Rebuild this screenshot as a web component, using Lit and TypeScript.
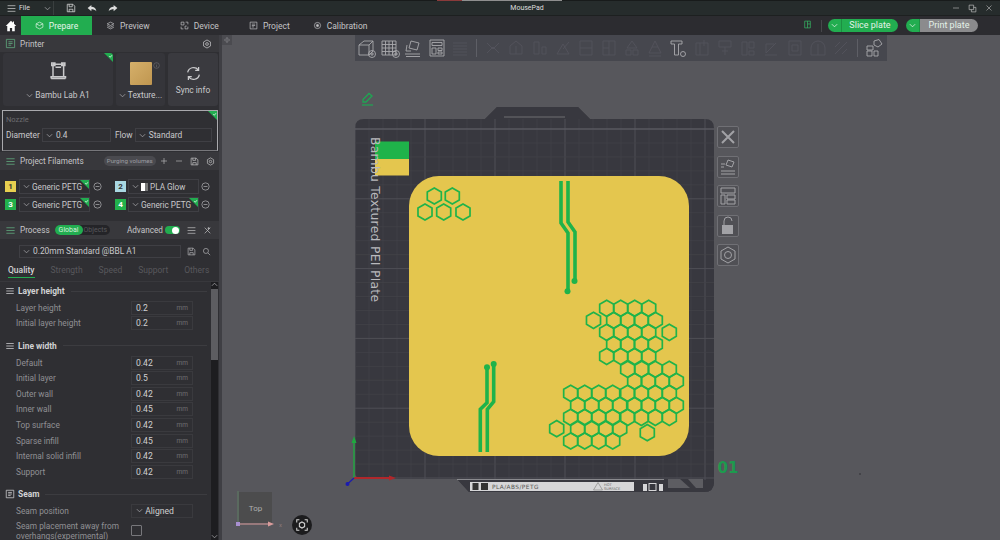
import { LitElement, html, css, svg } from 'lit';
import { customElement } from 'lit/decorators.js';

// hex centres on the pad, page coordinates
const colA = [606.7, 620.7, 634.7, 648.7];
const colB = [613.7, 627.7, 641.3, 655.3];
const lowA = [570.7, 584.7, 598.7, 612.7];
const lowB = [577.7, 591.7, 605.7, 619.7];
const hexRows: [number, number[]][] = [
  [196, [434.3, 452.3]],
  [212, [425, 443.7, 463]],
  [308.3, colA],
  [320.3, [593.5, ...colB]],
  [332.3, [...colA, 669.3]],
  [344.3, colB],
  [356.3, colA],
  [369.3, [627.7, 641.7, 655.3, 669.3]],
  [381.3, [634.7, 648.3, 662.3, 676.3]],
  [393.3, [...lowA, 627.7, 641.3, 655.3, 669.3]],
  [405.3, [...lowB, 634.7, 648.3, 662.3, 676.3]],
  [417.3, [...lowA, 627.7, 641.3, 655.3, 669.3]],
  [428.7, [556.7, ...lowB]],
  [432.7, [647.3]],
  [441, lowA],
];

const hex = (x: number, y: number) => {
  const r = 8.1;
  const w = r * 0.866;
  return `${x},${y - r} ${x + w},${y - r / 2} ${x + w},${y + r / 2} ${x},${y + r} ${x - w},${y + r / 2} ${x - w},${y - r / 2}`;
};

const chevron = html`<svg class="chev" viewBox="0 0 8 8"><path d="M1 2.5 4 5.5 7 2.5" /></svg>`;
const tick = html`<svg class="tick" viewBox="0 0 8 8"><path d="M3 4.4 4.4 5.6 6.6 3" /></svg>`;

const icon = (body: unknown, size = 12) =>
  html`<svg class="icon" width=${size} height=${size} viewBox="0 0 16 16">${body}</svg>`;

const ICONS = {
  menu: svg`<path d="M1 3H15M1 8H15M1 13H15" />`,
  save: svg`<path d="M2 2H11L14 5V14H2ZM5 2V6H10V2M5 14V10H11V14" />`,
  undo: svg`<path fill="currentColor" stroke="none" d="M7 3 1 8 7 13V10C10 10 13 11 15 13 14 8 11 6 7 6Z" />`,
  redo: svg`<path fill="currentColor" stroke="none" d="M9 3 15 8 9 13V10C6 10 3 11 1 13 2 8 5 6 9 6Z" />`,
  home: svg`<path fill="currentColor" stroke="none" d="M8 1 1 8H3V15H6.5V10.5H9.5V15H13V8H15L12 5V2H10.5V3.5Z" />`,
  prepare: svg`<path d="M8 2 14 5V11L8 14 2 11V5ZM2 5 8 8 14 5" />`,
  preview: svg`<path d="M8 2 14 5 8 8 2 5ZM2 8 8 11 14 8M2 11 8 14 14 11" />`,
  device: svg`<path d="M2 2H7V7H2ZM10 2H14V6M14 10V14H9V9H12M2 10V14H6" />`,
  project: svg`<path d="M2 2H14V14H2ZM5 5.5H11M5 8H11M5 10.5H9" />`,
  calib: svg`<circle cx="8" cy="8" r="5.5" /><circle cx="8" cy="8" r="2" fill="currentColor" />`,
  gear: svg`<path d="M8 1.5 13.5 4.7V11.3L8 14.5 2.5 11.3V4.7Z" /><circle cx="8" cy="8" r="2.2" />`,
  printer: svg`<path d="M4 2.5H12.5M4 2.5V12.5M12.5 2.5V12.5M2.5 14H14M2.5 14V12.5H14V14M3 1.5H5.5V3.5H3ZM11 1.5H13.5V3.5H11ZM6 5H10.5" />`,
  minus: svg`<circle cx="8" cy="8" r="6.5" /><path d="M4.5 8H11.5" />`,
  plus: svg`<path d="M8 2V14M2 8H14" />`,
  dash: svg`<path d="M2 8H14" />`,
  list: svg`<path d="M1 3H15M1 8H15M1 13H15" />`,
  wrench: svg`<path d="M3 3 13 13M3 13 13 3M10 2V6M8 4H12" />`,
  search: svg`<circle cx="7" cy="7" r="4.5" /><path d="M10.5 10.5 14.5 14.5" />`,
  layers: svg`<path d="M2 4H14M2 8H14M2 12H14" />`,
  info: svg`<circle cx="8" cy="8" r="6.5" /><path d="M8 7V12M8 4V5.5" />`,
  pages: svg`<path d="M2 2H10V10H2ZM6 10V14H14V6H10" />`,
  sync: svg`<path d="M2.5 7A5.7 5.7 0 0 1 12.5 4.5M13.5 9A5.7 5.7 0 0 1 3.5 11.5M12.8 1.8V5H9.6M3.2 14.2V11H6.4" />`,
};

const TOOL_ICONS = {
  cube: svg`<path d="M2 7 7 3H16V13L12 17H2ZM2 7H12V17M12 7 16 3" /><circle cx="15" cy="16" r="3.5" /><path d="M13 16H17M15 14V18" />`,
  grid: svg`<path d="M2 3H16V17H2ZM2 6.5H16M2 10H16M2 13.5H16M5.5 3V17M9 3V17M12.5 3V17" /><circle cx="16" cy="16" r="3.5" /><path d="M14 16H18M16 14V18" />`,
  arrange: svg`<path d="M8 3 16 5 14 12 6 10ZM2 16H17M3 18.5H17M4 7 3 13H8" />`,
  layout: svg`<path d="M3 2H17V18H3ZM5 4.5H15V7.5H5ZM5 10H9V16H5ZM11 10H15V12.5H11ZM11 14H15V16H11Z" />`,
  lines: svg`<path d="M3 5H17M3 8H17M3 11H17M3 14H17M3 17H17" />`,
  tee: svg`<path d="M2 3H13V6H9.5V17H5.5V6H2Z" /><circle cx="14" cy="16" r="2.5" />`,
  puzzle: svg`<path d="M10 3 15 1.5 18 6 14 9 10 7ZM3 8H9V12H3ZM3 13H8V18H3ZM10 13H14V18H10Z" />`,
};

// the greyed-out tools, barely visible in the toolbar
const FAINT_ICONS = [
  svg`<path d="M4 5 10 11 16 5M4 15 10 9 16 15" />`,
  svg`<path d="M10 3 16 8V16H4V8ZM10 8V16" />`,
  svg`<path d="M4 4H9V16H4ZM12 9H16V16H12Z" />`,
  svg`<path d="M4 16 10 6 16 16ZM10 11 16 4" />`,
  svg`<path d="M4 3H16V17H4ZM4 10H16" />`,
  svg`<path d="M4 3H16V17H4ZM10 3V17M4 10H10" />`,
  svg`<path d="M10 3 15 10H5ZM4 12H9V17H4ZM11 12H16V17H11Z" />`,
  svg`<path d="M10 3 16 15H4ZM7 9H13M4 18H16" />`,
  svg`<path d="M4 5H16V17H4ZM8 5V17M12 2V8" />`,
  svg`<path d="M4 3H16V9H4ZM10 9V17M7 13H13" />`,
  svg`<path d="M4 4H9V17H4ZM11 4H16V10H11ZM11 13H16V17H11Z" />`,
  svg`<path d="M5 15 15 5M5 15V6H13M4 17H16" />`,
  svg`<path d="M4 3H16V17H4ZM7 7H13V13H7Z" />`,
  svg`<path d="M3 10A7 7 0 0 1 17 10V17H3ZM10 6V17" />`,
  svg`<path d="M4 16 16 4M11 16 16 11M4 9 9 4" />`,
];

const SIDE_ICONS = [
  svg`<path stroke-width="2" d="M5 5 17 17M17 5 5 17" />`,
  svg`<path d="M11 4 17 6 15 11 9 9ZM4 15H18M4 18H18M4 8H8M4 11H7" />`,
  svg`<path d="M4 3H18V8H4ZM4 10H8V19H4ZM10 10H18V14H10ZM10 15H18V19H10Z" />`,
  svg`<path d="M7 10V6A4 4 0 0 1 15 6" /><path fill="currentColor" stroke="none" d="M5 10H16V19H5Z" />`,
  svg`<path d="M11 3 18 7V15L11 19 4 15V7Z" /><circle cx="11" cy="11" r="3.5" />`,
];

interface Group {
  title: string;
  glyph: unknown;
  rows: [string, string][];
}

const GROUPS: Group[] = [
  {
    title: 'Layer height',
    glyph: ICONS.layers,
    rows: [
      ['Layer height', '0.2'],
      ['Initial layer height', '0.2'],
    ],
  },
  {
    title: 'Line width',
    glyph: ICONS.layers,
    rows: [
      ['Default', '0.42'],
      ['Initial layer', '0.5'],
      ['Outer wall', '0.42'],
      ['Inner wall', '0.45'],
      ['Top surface', '0.42'],
      ['Sparse infill', '0.45'],
      ['Internal solid infill', '0.42'],
      ['Support', '0.42'],
    ],
  },
];

@customElement('app-root')
export class AppRoot extends LitElement {
  static styles = css`
    :host {
      display: block;
      width: 1000px;
      height: 540px;
      overflow: hidden;
      font-family: Roboto, 'Noto Sans', sans-serif;
      font-size: 8.2px;
      color: #c9c9cb;
      background: #2d2d31;
      white-space: nowrap;
    }
    svg.icon {
      fill: none;
      stroke: currentColor;
      stroke-width: 1.2;
      flex: none;
    }
    .chev {
      width: 7px;
      height: 7px;
      flex: none;
      fill: none;
      stroke: #a5a5a8;
      stroke-width: 0.9;
    }
    .strip {
      height: 1px;
      background: #181b1b;
      display: flex;
      padding-left: 437px;
    }
    .strip i {
      width: 25px;
      background: #8a3a3a;
    }
    .strip b {
      width: 100px;
      background: #8f8f8f;
    }
    .titlebar {
      height: 15px;
      background: #262c2c;
      display: flex;
      align-items: center;
      color: #dcdcdc;
      font-size: 7px;
      border-bottom: 1px solid #1d2020;
      box-sizing: border-box;
    }
    .file {
      width: 54px;
      padding-left: 7px;
      box-sizing: border-box;
      display: flex;
      align-items: center;
      gap: 3px;
      border-right: 1px solid #3a3f3f;
      height: 14px;
    }
    .file .chev {
      margin-left: 11px;
    }
    .quick {
      display: flex;
      gap: 11px;
      padding-left: 12px;
      width: 413px;
      box-sizing: border-box;
    }
    .title {
      width: 120px;
      text-align: center;
    }
    .win {
      margin-left: auto;
      display: flex;
      gap: 8px;
      padding-right: 7px;
      color: #c0c0c0;
    }
    .tabs {
      height: 19px;
      background: #2c2c30;
      display: flex;
      align-items: center;
      font-size: 8.5px;
    }
    .home {
      width: 21px;
      display: flex;
      justify-content: center;
      color: #fff;
    }
    .tab {
      height: 19px;
      display: flex;
      align-items: center;
      gap: 5px;
      color: #c4c4c6;
    }
    .tab.on {
      background: #22ad50;
      color: #e6f5ea;
      justify-content: center;
      width: 71px;
    }
    .actions {
      margin-left: auto;
      display: flex;
      align-items: center;
      padding-right: 22px;
    }
    .actions .phone {
      color: #35c067;
    }
    .actions .sep {
      width: 1px;
      height: 12px;
      background: #46464a;
      margin: 0 6px 0 9px;
    }
    .pill {
      height: 13px;
      border-radius: 7px;
      display: flex;
      overflow: hidden;
      color: #e4f2e8;
      font-size: 9px;
    }
    .pill .drop {
      width: 13px;
      background: #22ad50;
      border-right: 1px solid #1c8f42;
      display: flex;
      align-items: center;
      justify-content: center;
    }
    .pill .drop .chev {
      stroke: #e4f2e8;
    }
    .pill span {
      flex: 1;
      text-align: center;
      line-height: 13px;
      background: #22ad50;
    }
    .pill.slice {
      width: 70px;
      margin-right: 8px;
    }
    .pill.print {
      width: 72px;
    }
    .pill.print span {
      background: #8b8b8d;
    }
    .main {
      display: flex;
      height: 505px;
    }
    .side {
      width: 219px;
      flex: none;
      display: flex;
      flex-direction: column;
      background: #2f2f33;
    }
    .gutter {
      width: 3px;
      flex: none;
      background: #3f3f44;
    }
    .head {
      background: #38383c;
      display: flex;
      align-items: center;
      padding: 0 7px 0 5px;
      gap: 4px;
      flex: none;
      font-size: 8.2px;
      color: #c6c6c8;
    }
    .head .ghost {
      color: #5fa57c;
      display: flex;
    }
    .end {
      margin-left: auto;
      display: flex;
      align-items: center;
      gap: 7px;
    }
    .cards {
      height: 58px;
      flex: none;
      box-sizing: border-box;
      padding: 1px 2px 4px 3px;
      display: grid;
      grid-template-columns: 110px 49px 50px;
      gap: 3px;
    }
    .card {
      position: relative;
      background: #35353a;
      border-radius: 3px;
      display: flex;
      flex-direction: column;
      align-items: center;
      justify-content: space-between;
      padding: 8px 0 6px;
      box-sizing: border-box;
      overflow: hidden;
    }
    .card .cap {
      display: flex;
      align-items: center;
      gap: 2px;
      font-size: 8.4px;
    }
    .card.sync {
      background: #3a3a3f;
      justify-content: center;
      gap: 3px;
      padding: 0;
    }
    .bed {
      width: 22px;
      height: 23px;
      margin-top: 1px;
      background: linear-gradient(135deg, #d6b06a, #bf9650);
      border-radius: 1px;
    }
    .card .info {
      position: absolute;
      top: 8px;
      right: 5px;
      color: #77777b;
    }
    .corner {
      position: absolute;
      top: 0;
      right: 0;
      width: 0;
      height: 0;
      border-style: solid;
      border-width: 0 9px 9px 0;
      border-color: transparent #22ad50 transparent transparent;
    }
    .tick {
      position: absolute;
      top: 0;
      right: -9px;
      width: 6px;
      height: 6px;
      fill: none;
      stroke: #fff;
      stroke-width: 1;
    }
    .nozzle {
      position: relative;
      height: 41px;
      flex: none;
      margin: 0 1px 1px 2px;
      box-sizing: border-box;
      border: 1px solid #a9a9ad;
      border-bottom-color: #77777b;
      padding: 3px;
      display: flex;
      flex-direction: column;
      gap: 3px;
    }
    .nozzle .lab {
      color: #6d6d71;
      font-size: 7.5px;
      line-height: 11px;
    }
    .nozzle .line {
      display: flex;
      align-items: center;
      font-size: 8.4px;
    }
    .combo {
      position: relative;
      box-sizing: border-box;
      border: 1px solid #3f3f44;
      height: 14px;
      display: flex;
      align-items: center;
      gap: 3px;
      padding-left: 3px;
      color: #c9c9cb;
      flex: none;
    }
    .nozzle .d {
      width: 69px;
      margin: 0 4px 0 2px;
    }
    .nozzle .f {
      width: 77px;
      margin-left: 2px;
    }
    .fils {
      height: 51px;
      flex: none;
      box-sizing: border-box;
      padding: 9px 0 0 5px;
      display: grid;
      grid-template-columns: 11px 71px 16px 11px 71px 16px;
      grid-auto-rows: 15px;
      column-gap: 2px;
      row-gap: 3px;
      align-items: center;
    }
    .fils .combo {
      height: 15px;
      margin-left: 1px;
      width: 71px;
      gap: 2px;
    }
    .fils .m {
      margin-left: 2px;
      color: #b8b8ba;
      display: flex;
    }
    .fils .second {
      margin-left: 6px;
    }
    .sw {
      width: 11px;
      height: 11px;
      font-size: 8px;
      line-height: 11px;
      text-align: center;
      font-weight: 700;
      color: #333;
    }
    .sw.green {
      color: #fff;
      background: #22b14c;
    }
    .sw.yellow {
      background: #e8cf50;
    }
    .sw.blue {
      background: #a9d8e2;
    }
    .glow {
      width: 7px;
      height: 8px;
      background: linear-gradient(90deg, #fff 50%, #777 50%);
      flex: none;
    }
    .purge {
      background: #4a4a4f;
      border-radius: 7px;
      padding: 0 3px;
      font-size: 6.2px;
      line-height: 10px;
      color: #9c9ca0;
      margin-left: 16px;
    }
    .switch {
      background: #242428;
      border-radius: 7px;
      display: flex;
      align-items: center;
      margin-left: 1px;
      font-size: 7px;
      padding-right: 3px;
      color: #58585c;
      line-height: 10px;
    }
    .switch b {
      background: #22ad50;
      color: #d8efdf;
      font-weight: 400;
      border-radius: 6px;
      padding: 0 4px;
      margin-right: 1px;
    }
    .toggle {
      width: 15px;
      height: 8px;
      background: #22ad50;
      border-radius: 4px;
      display: flex;
      justify-content: flex-end;
      align-items: center;
      padding-right: 1px;
      box-sizing: border-box;
      margin-left: -5px;
    }
    .toggle i {
      width: 7px;
      height: 7px;
      border-radius: 50%;
      background: #fff;
    }
    .preset {
      height: 24px;
      flex: none;
      display: flex;
      align-items: center;
      padding-left: 19px;
      gap: 6px;
      color: #b5b5b8;
    }
    .preset .combo {
      width: 162px;
      font-size: 8.4px;
      height: 13px;
    }
    .qtabs {
      height: 19px;
      flex: none;
      display: flex;
      padding-left: 8px;
      gap: 16px;
      color: #58585c;
      font-size: 8.5px;
      align-items: flex-start;
      border-bottom: 1px solid #38383c;
      box-sizing: border-box;
    }
    .qtabs span {
      line-height: 14px;
    }
    .qtabs .on {
      color: #d4d4d6;
      font-weight: 500;
      height: 15px;
      box-sizing: border-box;
      border-bottom: 1.5px solid #22ad50;
    }
    .scrollwrap {
      flex: 1;
      display: flex;
      min-height: 0;
    }
    .settings {
      flex: 1;
      min-width: 0;
      overflow: hidden;
    }
    .scrollbar {
      width: 7px;
      margin-right: 1px;
      background: #1d1d20;
      display: flex;
      flex-direction: column;
      align-items: center;
    }
    .scrollbar .up {
      height: 7px;
      width: 7px;
      transform: rotate(180deg);
    }
    .scrollbar .thumb {
      width: 7px;
      height: 71px;
      background: #5d5d61;
    }
    .scrollbar .fill {
      flex: 1;
    }
    .gh {
      height: 18px;
      display: flex;
      align-items: center;
      padding-left: 5px;
      gap: 3px;
      font-weight: 700;
      font-size: 8.4px;
      color: #d2d2d4;
    }
    .gh i {
      flex: 1;
      height: 1px;
      background: #3c3c40;
      margin: 0 4px 0 3px;
    }
    .group + .group {
      margin-top: 5.6px;
    }
    .row {
      height: 15.6px;
      display: flex;
      align-items: center;
      padding-left: 16px;
      color: #8f8f93;
      font-size: 8.3px;
    }
    .row .val {
      margin-left: auto;
      margin-right: 18px;
      width: 62px;
      height: 14px;
      box-sizing: border-box;
      border: 1px solid #3a3a3e;
      display: flex;
      align-items: center;
      padding: 0 4px;
      color: #cfcfd1;
      font-size: 8.6px;
    }
    .row .val small {
      margin-left: auto;
      font-size: 6.5px;
      color: #6f6f73;
    }
    .row.tall {
      height: 24px;
      line-height: 10px;
    }
    .row.tall span {
      width: 115px;
    }
    .check {
      width: 9px;
      height: 9px;
      border: 1px solid #77777b;
      border-radius: 1px;
    }
    .canvas {
      position: relative;
      flex: 1;
      background: #57575c;
      overflow: hidden;
    }
    .canvas > svg.scene {
      display: block;
    }
    .collapse {
      position: absolute;
      top: 0;
      left: 0;
      width: 10px;
      height: 10px;
      background: #4b4b50;
      color: #9a9a9d;
      display: flex;
      align-items: center;
      justify-content: center;
    }
    .toolbar {
      position: absolute;
      top: 0;
      left: 133px;
      width: 532px;
      height: 26px;
      background: #46474e;
      display: flex;
      align-items: center;
      padding-left: 2px;
      box-sizing: border-box;
      gap: 3.2px;
      color: #a9a9ad;
    }
    .toolbar .faint {
      color: #53545c;
    }
    .toolbar svg {
      fill: none;
      stroke: currentColor;
      stroke-width: 0.9;
      flex: none;
    }
    .toolbar .bar {
      width: 1px;
      height: 18px;
      background: #5e5f66;
      flex: none;
      margin: 0 3px;
    }
    .sidetools {
      position: absolute;
      left: 495px;
      top: 91px;
      display: flex;
      flex-direction: column;
      gap: 7.5px;
    }
    .sidetools div {
      width: 22px;
      height: 22px;
      box-sizing: border-box;
      border: 1px solid #707075;
      border-radius: 2px;
      background: #505055;
      color: #a2a2a6;
    }
    .sidetools svg {
      display: block;
      margin: -1px;
      fill: none;
      stroke: currentColor;
      stroke-width: 1;
    }
    .shot {
      position: absolute;
      left: 70px;
      top: 480px;
      width: 20px;
      height: 20px;
      border-radius: 50%;
      background: #1c1c1e;
      color: #d4d4d4;
      display: flex;
      align-items: center;
      justify-content: center;
    }
  `;

  private combo(label: string, extra: unknown = '', cls = '') {
    return html`<div class="combo ${cls}">${chevron}<span>${label}</span>${extra}</div>`;
  }

  private corner() {
    return html`<div class="corner">${tick}</div>`;
  }

  private renderTop() {
    const tabs: [string, unknown, number][] = [
      ['Preview', ICONS.preview, 14],
      ['Device', ICONS.device, 30],
      ['Project', ICONS.project, 30],
      ['Calibration', ICONS.calib, 23],
    ];
    return html`
      <div class="strip"><i></i><b></b></div>
      <div class="titlebar">
        <div class="file">${icon(ICONS.menu, 9)}<span>File</span>${chevron}</div>
        <div class="quick">
          ${icon(ICONS.save, 10)} ${icon(ICONS.undo, 10)} ${icon(ICONS.redo, 10)}
        </div>
        <div class="title">MousePad</div>
        <div class="win">
          ${icon(ICONS.dash, 8)} ${icon(ICONS.pages, 9)} ${icon(svg`<path d="M3 3 13 13M13 3 3 13" />`, 8)}
        </div>
      </div>
      <div class="tabs">
        <div class="home">${icon(ICONS.home, 12)}</div>
        <div class="tab on">${icon(ICONS.prepare, 9)}<span>Prepare</span></div>
        ${tabs.map(
          ([t, g, m]) =>
            html`<div class="tab" style="margin-left:${m}px">${icon(g, 9)}<span>${t}</span></div>`,
        )}
        <div class="actions">
          <div class="phone">${icon(svg`<path d="M3 2H13V14H3ZM8 2V14M8 7H13" />`, 9)}</div>
          <div class="sep"></div>
          <div class="pill slice"><div class="drop">${chevron}</div><span>Slice plate</span></div>
          <div class="pill print"><div class="drop">${chevron}</div><span>Print plate</span></div>
        </div>
      </div>
    `;
  }

  private renderPrinter() {
    return html`
      <div class="head" style="height:17px">
        <span class="ghost">${icon(ICONS.project, 11)}</span><span>Printer</span>
        <div class="end">${icon(ICONS.gear, 10)}</div>
      </div>
      <div class="cards">
        <div class="card">
          ${this.corner()}${icon(ICONS.printer, 20)}
          <div class="cap">${chevron}<span>Bambu Lab A1</span></div>
        </div>
        <div class="card">
          <div class="bed"></div>
          <div class="info">${icon(ICONS.info, 7)}</div>
          <div class="cap">${chevron}<span>Texture...</span></div>
        </div>
        <div class="card sync">
          ${icon(ICONS.sync, 17)}
          <div class="cap"><span>Sync info</span></div>
        </div>
      </div>
      <div class="nozzle">
        ${this.corner()}
        <div class="lab">Nozzle</div>
        <div class="line">
          <span>Diameter</span>${this.combo('0.4', '', 'd')}
          <span>Flow</span>${this.combo('Standard', '', 'f')}
        </div>
      </div>
    `;
  }

  private renderFilaments() {
    const fils: [string, string, string, boolean, boolean][] = [
      ['1', 'yellow', 'Generic PETG', true, false],
      ['2', 'blue', 'PLA Glow', false, true],
      ['3', 'green', 'Generic PETG', true, false],
      ['4', 'green', 'Generic PETG', true, false],
    ];
    return html`
      <div class="head" style="height:18px">
        <span class="ghost">${icon(ICONS.layers, 11)}</span><span>Project Filaments</span>
        <span class="purge">Purging volumes</span>
        <div class="end">
          ${icon(ICONS.plus, 8)} ${icon(ICONS.dash, 8)} ${icon(ICONS.save, 9)} ${icon(ICONS.gear, 9)}
        </div>
      </div>
      <div class="fils">
        ${fils.map(
          ([n, c, label, corner, glow], i) => html`
            <div class="sw ${c} ${i % 2 ? 'second' : ''}">${n}</div>
            <div class="combo ${i % 2 ? 'second' : ''}">
              ${chevron}${glow ? html`<span class="glow"></span>` : ''}<span>${label}</span>
              ${corner ? this.corner() : ''}
            </div>
            <div class="m ${i % 2 ? 'second' : ''}">${icon(ICONS.minus, 9)}</div>
          `,
        )}
      </div>
    `;
  }

  private renderProcess() {
    return html`
      <div class="head" style="height:18px">
        <span class="ghost">${icon(ICONS.layers, 11)}</span><span>Process</span>
        <div class="switch"><b>Global</b>Objects</div>
        <div class="end">
          <span>Advanced</span>
          <div class="toggle"><i></i></div>
          ${icon(ICONS.list, 9)} ${icon(ICONS.wrench, 9)}
        </div>
      </div>
      <div class="preset">
        ${this.combo('0.20mm Standard @BBL A1')} ${icon(ICONS.save, 9)} ${icon(ICONS.search, 9)}
      </div>
      <div class="qtabs">
        <span class="on">Quality</span><span>Strength</span><span>Speed</span><span>Support</span
        ><span>Others</span>
      </div>
    `;
  }

  private renderSettings() {
    return html`
      <div class="scrollwrap">
        <div class="settings">
          ${GROUPS.map(
            (g) => html`
              <div class="group">
                <div class="gh">${icon(g.glyph, 10)}<span>${g.title}</span><i></i></div>
                ${g.rows.map(
                  ([k, v]) => html`
                    <div class="row">
                      <span>${k}</span>
                      <div class="val">${v}<small>mm</small></div>
                    </div>
                  `,
                )}
              </div>
            `,
          )}
          <div class="group">
            <div class="gh">${icon(ICONS.project, 10)}<span>Seam</span><i></i></div>
            <div class="row">
              <span>Seam position</span>
              <div class="val">${chevron}&nbsp;Aligned</div>
            </div>
            <div class="row tall">
              <span>Seam placement away from<br />overhangs(experimental)</span>
              <div class="check"></div>
            </div>
          </div>
        </div>
        <div class="scrollbar">
          <div class="up">${chevron}</div>
          <div class="thumb"></div>
          <div class="fill"></div>
          ${chevron}
        </div>
      </div>
    `;
  }

  private renderPlate() {
    const v: number[] = [];
    for (let x = 355; x < 714; x += 14) v.push(x);
    const h: number[] = [];
    for (let y = 478; y > 115; y -= 13.96) h.push(y);
    const outline =
      'M355 128Q355 119 364 119H485L497 107H578L590 119H705Q714 119 714 128V482Q714 492 704 492H469L457 479H362Q355 479 355 472Z';
    return svg`
      <defs>
        <clipPath id="plate-clip"><path d=${outline} /></clipPath>
      </defs>
      <path fill="#38383f" d=${outline} />
      <g clip-path="url(#plate-clip)">
        ${v.map((x, i) => svg`<path d="M${x} 119V492" stroke=${i % 5 === 0 ? '#4f4f56' : '#434349'} stroke-width=${i % 5 === 0 ? 1 : 0.7} />`)}
        ${h.map((y, i) => svg`<path d="M355 ${y}H714" stroke=${i % 5 === 0 ? '#4f4f56' : '#434349'} stroke-width=${i % 5 === 0 ? 1 : 0.7} />`)}
        <rect x="355" y="107" width="359" height="12" fill="#38383f" />
        <rect x="457" y="480" width="257" height="12" fill="#38383f" />
      </g>
      <path d="M504 117H565" stroke="#5c5c62" stroke-width="1.5" />
      <path d="M355 129H714" stroke="#66666c" stroke-width="0.8" />
      <path d="M457 479.5H664" stroke="#8a8a8e" stroke-width="1" />

      <rect x="409" y="176" width="280" height="280" rx="30" fill="#e4c64e" />
      <rect x="375" y="141.5" width="34" height="17.5" fill="#1fb34a" />
      <rect x="375" y="159" width="34" height="16.5" fill="#e4c64e" />
      <text transform="translate(371 137) rotate(90)" font-family="'DejaVu Sans', sans-serif" font-size="12.3" fill="#b9b9bd" textLength="165">Bambu Textured PEI Plate</text>

      <g fill="none" stroke="#1fb34a" stroke-width="1.7">
        ${hexRows.map(([y, xs]) => xs.map((x) => svg`<polygon points=${hex(x, y)} />`))}
      </g>
      <g fill="none" stroke="#1fb34a" stroke-width="3.6">
        <path d="M561 181V223L568 233V291" />
        <path d="M568 181V222L575 232V281" />
        <path d="M480.3 452V409.3L487 402.7V367" />
        <path d="M487.3 452V409.3L493.7 401.7V364" />
      </g>
      <g fill="#1fb34a">
        <circle cx="567.5" cy="291.3" r="3" />
        <circle cx="574.5" cy="281" r="3" />
        <circle cx="487" cy="367.3" r="3" />
        <circle cx="493.7" cy="364" r="3" />
      </g>

      <rect x="470" y="482" width="164" height="9" fill="#d6d6d8" />
      <rect x="472.5" y="483" width="6" height="7" fill="#333" />
      <rect x="481" y="483" width="7" height="7" fill="#333" />
      <text x="492" y="489" font-family="'DejaVu Sans', sans-serif" font-size="5.8" letter-spacing="0.45" fill="#555">PLA/ABS/PETG</text>
      <path d="M598 482.5 602.5 490H593.5Z" fill="none" stroke="#888" stroke-width="0.7" />
      <text x="604" y="486" font-family="'DejaVu Sans', sans-serif" font-size="3.6" fill="#666">HOT</text>
      <text x="604" y="490" font-family="'DejaVu Sans', sans-serif" font-size="3.6" fill="#666">SURFACE</text>
      <rect x="643" y="484" width="4" height="7" fill="#d6d6d8" />
      <rect x="649" y="483.5" width="7" height="7" fill="none" stroke="#d6d6d8" />
      <rect x="659" y="484" width="4" height="7" fill="#d6d6d8" />
      <path d="M668 479H680L690 488H668Z" fill="#5d5d62" />
      <path d="M688 479H703V488H696Z" fill="#5d5d62" />
      <text x="717.5" y="472.5" font-family="'DejaVu Sans', sans-serif" font-weight="700" font-size="15" fill="#1d9a4e">01</text>

      <path d="M354 478V441" stroke="#1fa83f" stroke-width="1.4" />
      <path d="M354 436 351.5 443H356.5Z" fill="#1fa83f" />
      <path d="M354 478H390" stroke="#b0272b" stroke-width="1.8" />
      <path d="M396 478 389 475.5V480.5Z" fill="#b0272b" />
      <path d="M354 478 348 483.5" stroke="#1b1bb0" stroke-width="1.2" />
      <circle cx="347.5" cy="484" r="2" fill="#1b1bb0" />
      <circle cx="860" cy="474" r="0.8" fill="#2c2c30" />

      <g fill="none" stroke="#1fa653" stroke-width="1.3">
        <path d="M363 99.5 369 93.5 372 96 366 102H363Z" />
      </g>
      <path d="M362 105H373" stroke="#1fa653" stroke-width="1.2" />

      <rect x="239" y="492" width="33" height="31" fill="#4c4c4d" />
      <text x="255.5" y="510.5" text-anchor="middle" font-family="Roboto, sans-serif" font-size="8" fill="#aeaeae">Top</text>
      <path d="M238 524V491" stroke="#5e7f63" stroke-width="1" />
      <path d="M238 524H271" stroke="#d99c9c" stroke-width="1.2" />
      <path d="M274 524 268 521.5V526.5Z" fill="#d99c9c" />
      <rect x="236" y="522" width="4" height="4" fill="#a88fd0" />
      <text x="279" y="526.5" font-family="Roboto, sans-serif" font-size="6" fill="#8a7a7a">x</text>
    `;
  }

  private renderToolbar() {
    const t = TOOL_ICONS;
    const faint = (g: unknown) => html`<svg class="faint" width="20" height="20" viewBox="0 0 20 20">${g}</svg>`;
    const on = (g: unknown) => html`<svg width="20" height="20" viewBox="0 0 20 20">${g}</svg>`;
    return html`
      <div class="toolbar">
        ${on(t.cube)} ${on(t.grid)} ${on(t.arrange)} ${on(t.layout)} ${faint(t.lines)}
        <div class="bar"></div>
        ${FAINT_ICONS.slice(0, 8).map(faint)} ${on(t.tee)} ${FAINT_ICONS.slice(8).map(faint)}
        <div class="bar"></div>
        ${on(t.puzzle)}
      </div>
    `;
  }

  render() {
    return html`
      ${this.renderTop()}
      <div class="main">
        <div class="side">
          ${this.renderPrinter()} ${this.renderFilaments()} ${this.renderProcess()} ${this.renderSettings()}
        </div>
        <div class="gutter"></div>
        <div class="canvas">
          <svg class="scene" width="778" height="505" viewBox="222 35 778 505">${this.renderPlate()}</svg>
          <div class="collapse">${icon(svg`<path d="M8 2V14M6 5 3 8 6 11M10 5 13 8 10 11" />`, 8)}</div>
          ${this.renderToolbar()}
          <div class="sidetools">
            ${SIDE_ICONS.map((g) => html`<div><svg width="22" height="22" viewBox="0 0 22 22">${g}</svg></div>`)}
          </div>
          <div class="shot">
            ${icon(svg`<path d="M2 5V2H5M11 2H14V5M14 11V14H11M5 14H2V11" /><path d="M8 4.5 11 6.2V9.8L8 11.5 5 9.8V6.2Z" />`, 14)}
          </div>
        </div>
      </div>
    `;
  }
}
